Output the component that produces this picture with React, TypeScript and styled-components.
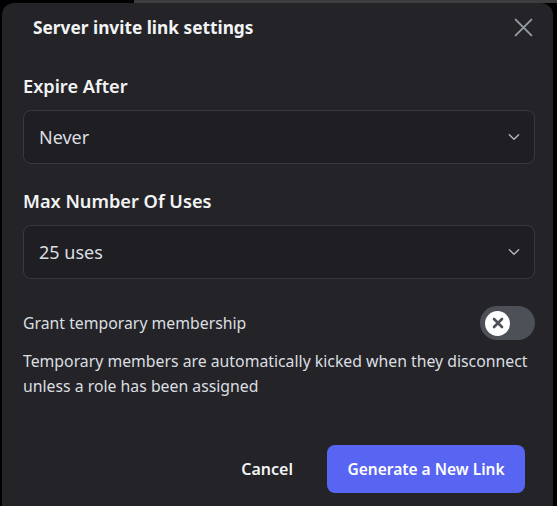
import styled, { createGlobalStyle } from "styled-components";

const GlobalStyle = createGlobalStyle`
  html, body {
    margin: 0;
    padding: 0;
  }
  body {
    width: 557px;
    height: 506px;
    overflow: hidden;
    background:
      linear-gradient(#3d3d40, #3d3d40) 134px 0 / 423px 3px no-repeat,
      #000;
    font-family: "Noto Sans", "Open Sans", sans-serif;
  }
`;

const Chevron = () => (
  <svg width="16" height="16" viewBox="0 0 24 24" fill="none">
    <path
      d="M5 8.5l7 7 7-7"
      stroke="#b5bac1"
      strokeWidth="2"
      strokeLinecap="round"
      strokeLinejoin="round"
    />
  </svg>
);

const CloseIcon = () => (
  <svg width="21" height="21" viewBox="0 0 24 24" fill="none">
    <path
      d="M3 3l18 18M21 3L3 21"
      stroke="#949ba4"
      strokeWidth="2.2"
      strokeLinecap="round"
    />
  </svg>
);

export default function App() {
  return (
    <>
      <GlobalStyle />
      <Modal>
        <Header>
          <Title>Server invite link settings</Title>
          <CloseButton aria-label="Close">
            <CloseIcon />
          </CloseButton>
        </Header>

        <Body>
          <Field>
            <Label>Expire After</Label>
            <Select>
              <span>Never</span>
              <Chevron />
            </Select>
          </Field>

          <Field>
            <Label>Max Number Of Uses</Label>
            <Select>
              <span>25 uses</span>
              <Chevron />
            </Select>
          </Field>

          <ToggleRow>
            <ToggleLabel>Grant temporary membership</ToggleLabel>
            <Toggle>
              <Knob>
                <svg width="14" height="14" viewBox="0 0 14 14">
                  <path
                    d="M3 3l8 8M11 3l-8 8"
                    stroke="#4e5058"
                    strokeWidth="2.6"
                    strokeLinecap="round"
                  />
                </svg>
              </Knob>
            </Toggle>
          </ToggleRow>
          <Note>
            Temporary members are automatically kicked when they disconnect
            unless a role has been assigned
          </Note>
        </Body>

        <Footer>
          <LinkButton>Cancel</LinkButton>
          <PrimaryButton>Generate a New Link</PrimaryButton>
        </Footer>
      </Modal>
    </>
  );
}

const Modal = styled.div`
  margin: 3px 0 0 2px;
  width: 551px;
  height: 512px;
  box-sizing: border-box;
  background: #242428;
  border-radius: 12px;
  display: flex;
  flex-direction: column;
`;

const Header = styled.div`
  display: flex;
  align-items: center;
  justify-content: space-between;
  padding: 9px 19px 0 31px;
  height: 30px;
`;

const Title = styled.h1`
  margin: 0;
  font-size: 17.3px;
  font-weight: 700;
  color: #f2f3f5;
`;

const CloseButton = styled.button`
  background: none;
  border: 0;
  padding: 0;
  display: flex;
  cursor: pointer;
`;

const Body = styled.div`
  display: flex;
  flex-direction: column;
  padding: 0 18px 0 21px;
`;

const Field = styled.div`
  display: flex;
  flex-direction: column;
  margin-top: 26px;
  &:first-child {
    margin-top: 33px;
  }
`;

const Label = styled.div`
  font-size: 18.2px;
  font-weight: 600;
  color: #f2f3f5;
  line-height: 22px;
  margin-bottom: 13px;
`;

const Select = styled.div`
  height: 54px;
  box-sizing: border-box;
  display: flex;
  align-items: center;
  justify-content: space-between;
  padding: 0 12px 0 15px;
  background: #1f1f23;
  border: 1px solid #38383e;
  border-radius: 8px;
  font-size: 18px;
  color: #dbdee1;
`;

const ToggleRow = styled.div`
  display: flex;
  align-items: center;
  justify-content: space-between;
  margin-top: 27px;
`;

const ToggleLabel = styled.div`
  font-size: 15.8px;
  color: #dbdee1;
`;

const Toggle = styled.div`
  width: 55px;
  height: 34px;
  border-radius: 17px;
  background: #4e5058;
  display: flex;
  align-items: center;
  padding-left: 5px;
  box-sizing: border-box;
`;

const Knob = styled.div`
  width: 25px;
  height: 25px;
  border-radius: 50%;
  background: #fff;
  display: flex;
  align-items: center;
  justify-content: center;
`;

const Note = styled.p`
  margin: 9px 0 0;
  font-size: 15.8px;
  line-height: 25px;
  color: #dbdee1;
`;

const Footer = styled.div`
  display: flex;
  justify-content: flex-end;
  align-items: center;
  gap: 34px;
  padding: 46px 28px 0 0;
`;

const LinkButton = styled.button`
  background: none;
  border: 0;
  padding: 0;
  font-family: inherit;
  font-size: 16px;
  font-weight: 600;
  color: #f2f3f5;
  cursor: pointer;
`;

const PrimaryButton = styled.button`
  width: 198px;
  height: 48px;
  border: 0;
  border-radius: 8px;
  background: #5865f2;
  color: #fff;
  font-family: inherit;
  font-size: 15.5px;
  font-weight: 600;
  cursor: pointer;
`;
